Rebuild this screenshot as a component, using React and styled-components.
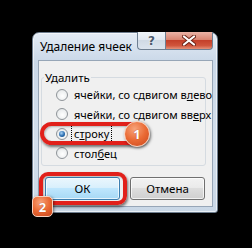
import styled, { createGlobalStyle } from "styled-components";

const GlobalStyle = createGlobalStyle`
  html, body {
    margin: 0;
    background: #000000;
  }
  body {
    width: 252px;
    height: 248px;
    overflow: hidden;
    font-family: "Noto Sans", "Open Sans", sans-serif;
  }
`

function Radio({ checked }) {
    return <RadioCircle>{checked && <RadioDot />}</RadioCircle>
}

function Option({ before, u, after, checked }) {
    return (
        <OptionRow>
            <Radio checked={checked} />
            <OptionLabel focused={checked ? 1 : 0}>
                {before}<U>{u}</U>{after}
            </OptionLabel>
        </OptionRow>
    )
}

function CloseGlyph() {
    return (
        <svg width="14" height="11" viewBox="0 0 14 11">
            <path d="M2 1.5 L12 9.5 M12 1.5 L2 9.5" stroke="#6b2418" strokeWidth="4" strokeLinecap="round" />
            <path d="M2 1.5 L12 9.5 M12 1.5 L2 9.5" stroke="#ffffff" strokeWidth="2.2" strokeLinecap="round" />
        </svg>
    )
}

export default function App() {
    return (
        <Page>
            <GlobalStyle />
            <Dialog>
                <TitleBar>
                    <Title>Удаление ячеек</Title>
                    <Caption>
                        <HelpButton>?</HelpButton>
                        <CloseButton><CloseGlyph /></CloseButton>
                    </Caption>
                </TitleBar>
                <Client>
                    <Group>
                        <Legend>Удалить</Legend>
                        <Option before="ячейки, со сдвигом в" u="л" after="ево" />
                        <Option before="ячейки, со сдвигом вв" u="е" after="рх" />
                        <Option before="с" u="т" after="року" checked />
                        <Option before="стол" u="б" after="ец" />
                    </Group>
                    <Buttons>
                        <Button primary={1}>ОК</Button>
                        <Button>Отмена</Button>
                    </Buttons>
                </Client>
            </Dialog>
            <Highlight left={40} top={122} width={108} height={23} radius={12} />
            <Highlight left={39} top={172} width={88} height={33} radius={9} />
            <Badge left={124} top={121} size={26} round={1}>1</Badge>
            <Badge left={32} top={196} size={21}>2</Badge>
        </Page>
    )
}

const Page = styled.div`
    position: relative;
    width: 252px;
    height: 248px;
    box-sizing: border-box;
    padding: 32px 0 0 32px;
`
const Dialog = styled.div`
    width: 186px;
    height: 181px;
    box-sizing: border-box;
    border: 1px solid #6d7d8e;
    border-radius: 7px 7px 3px 3px;
    background: linear-gradient(#e4ecf5, #cad8e8 16%, #d3dfec 60%, #c9d7e6);
    box-shadow: inset 0 0 0 1px rgba(255,255,255,0.6);
    display: flex;
    flex-direction: column;
    padding: 0 4px 5px 5px;
`
const TitleBar = styled.div`
    height: 27px;
    display: flex;
    justify-content: space-between;
    align-items: flex-start;
`
const Title = styled.div`
    padding: 6px 0 0 2px;
    font-size: 12px;
    line-height: 16px;
    color: #000000;
    white-space: nowrap;
`
const Caption = styled.div`
    display: flex;
    margin-top: -1px;
`
const CaptionButton = styled.div`
    height: 18px;
    box-sizing: border-box;
    border: 1px solid #6e7f92;
    border-top: 0;
    display: flex;
    align-items: center;
    justify-content: center;
`
const HelpButton = styled(CaptionButton)`
    width: 28px;
    border-radius: 0 0 0 4px;
    border-right: 0;
    background: linear-gradient(#f1f5f9, #e2e9f1 45%, #d0dae5 50%, #dbe4ee);
    color: #4a596b;
    font-size: 12px;
    font-weight: bold;
    font-family: "DejaVu Sans", sans-serif;
    text-shadow: 0 0 2px #ffffff;
`
const CloseButton = styled(CaptionButton)`
    width: 48px;
    border-radius: 0 0 4px 0;
    background: linear-gradient(#eab3a6, #d98572 45%, #c4402a 50%, #d0553c 80%, #e4927a);
`
const Client = styled.div`
    flex: 1;
    background: #f0f0f0;
    border: 1px solid #97a6b7;
    display: flex;
    flex-direction: column;
    padding: 9px 6px 6px 2px;
`
const Group = styled.fieldset`
    margin: 0;
    padding: 0 0 2px 2px;
    border: 1px solid #d5dbe1;
    border-radius: 3px;
    min-width: 0;
`
const Legend = styled.legend`
    padding: 0 1px;
    font-size: 11.5px;
    line-height: 15px;
    color: #000000;
`
const OptionRow = styled.div`
    height: 19.5px;
    display: flex;
    align-items: center;
    padding-left: 12px;
    gap: 3px;
    white-space: nowrap;
`
const RadioCircle = styled.div`
    flex: none;
    width: 12px;
    height: 12px;
    box-sizing: border-box;
    border-radius: 50%;
    border: 1px solid #8f9499;
    background: radial-gradient(circle at 55% 60%, #ffffff, #eceeef 60%, #cfd3d6);
    display: flex;
    align-items: center;
    justify-content: center;
`
const RadioDot = styled.div`
    width: 6px;
    height: 6px;
    border-radius: 50%;
    background: radial-gradient(circle at 40% 35%, #a9d3f5, #2a6db0 55%, #0d3e70);
`
const OptionLabel = styled.span`
    font-size: 11px;
    line-height: 15px;
    color: #000000;
    padding: 1px 2px;
    border: 1px dotted ${(props) => (props.focused ? "#000000" : "transparent")};
`
const U = styled.span`
    text-decoration: underline;
`
const Buttons = styled.div`
    display: flex;
    gap: 10px;
    margin-top: auto;
    padding-left: 4px;
`
const Button = styled.div`
    width: 75px;
    height: 23px;
    box-sizing: border-box;
    border-radius: 3px;
    border: 1px solid ${(props) => (props.primary ? "#3c7fb1" : "#707070")};
    background: ${(props) =>
        props.primary
            ? "linear-gradient(#eaf6fd, #d9f0fc 45%, #bee6fd 50%, #a7d9f5)"
            : "linear-gradient(#f2f2f2, #ebebeb 45%, #dddddd 50%, #cfcfcf)"};
    box-shadow: inset 0 0 0 1px rgba(255,255,255,0.7);
    display: flex;
    align-items: center;
    justify-content: center;
    font-size: 11.5px;
    color: #000000;
`
const Highlight = styled.div`
    position: absolute;
    left: ${(props) => props.left}px;
    top: ${(props) => props.top}px;
    width: ${(props) => props.width}px;
    height: ${(props) => props.height}px;
    box-sizing: border-box;
    border: 4px solid #e1201a;
    border-radius: ${(props) => props.radius}px;
    box-shadow: 1px 2px 3px rgba(0,0,0,0.55), inset 1px 1px 2px rgba(0,0,0,0.25);
`
const Badge = styled.div`
    position: absolute;
    left: ${(props) => props.left}px;
    top: ${(props) => props.top}px;
    width: ${(props) => props.size}px;
    height: ${(props) => props.size}px;
    box-sizing: border-box;
    border-radius: ${(props) => (props.round ? "50%" : "5px")};
    border: 1px solid #f7d2c0;
    background: radial-gradient(circle at 40% 30%, #f7a57d, #ea6a34 50%, #c9451b);
    box-shadow: 1px 1px 3px rgba(0,0,0,0.5);
    display: flex;
    align-items: center;
    justify-content: center;
    color: #ffffff;
    font-size: 13px;
    font-weight: bold;
    text-shadow: 0 0 1px #9a3310;
`
